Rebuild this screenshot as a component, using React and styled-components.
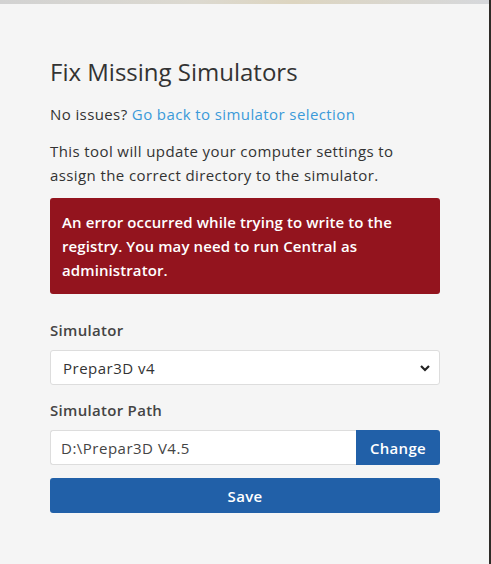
import React from "react";
import styled, { createGlobalStyle } from "styled-components";

const GlobalStyle = createGlobalStyle`
  html, body {
    margin: 0;
    padding: 0;
    background: #2e2b27;
  }
  * {
    box-sizing: border-box;
  }
`;

const Page = styled.div`
  display: flex;
  width: 491px;
  height: 564px;
  background: #2e2b27;
  font-family: "Open Sans", Lato, sans-serif;
`;

const Panel = styled.div`
  width: 489px;
  height: 564px;
  background: #f5f5f5;
  border-top: 4px solid transparent;
  border-image: linear-gradient(90deg, #d2d2d2, #dcd9d0 40%, #ddd5c0 60%, #d6d8dc) 1;
  padding: 52px 49px 0 50px;
  display: flex;
  flex-direction: column;
`;

const Title = styled.h1`
  margin: 0;
  font-size: 24px;
  font-weight: 400;
  color: #333;
  line-height: 32px;
`;

const Text = styled.p`
  margin: ${(p) => p.$mt || 0}px 0 0;
  font-size: 15px;
  line-height: 24px;
  color: #333;
  letter-spacing: 0.4px;
`;

const Link = styled.a`
  color: #3b9ad9;
  text-decoration: none;
  cursor: pointer;
`;

const ErrorBox = styled.div`
  margin-top: 11px;
  background: #93141e;
  color: #fff;
  border-radius: 3px;
  padding: 12px 40px 12px 12px;
  font-size: 15px;
  font-weight: 600;
  line-height: 24px;
  letter-spacing: 0.1px;
`;

const Label = styled.label`
  display: block;
  margin-top: ${(p) => p.$mt}px;
  font-size: 15px;
  font-weight: 600;
  color: #444;
  line-height: 20px;
  letter-spacing: 0.3px;
`;

const SelectBox = styled.div`
  margin-top: 10px;
  height: 35px;
  background: #fff;
  border: 1px solid #ddd;
  border-radius: 3px;
  display: flex;
  align-items: center;
  justify-content: space-between;
  padding: 0 8px 0 12px;
  font-size: 15px;
  color: #333;
  letter-spacing: 0.5px;
`;

const Group = styled.div`
  margin-top: 10px;
  display: flex;
  height: 35px;
`;

const Input = styled.div`
  flex: 1;
  background: #fff;
  border: 1px solid #ddd;
  border-right: none;
  border-radius: 3px 0 0 3px;
  display: flex;
  align-items: center;
  padding: 0 10px;
  font-size: 15px;
  color: #444;
  letter-spacing: 0.5px;
`;

const Button = styled.button`
  background: #2160a8;
  color: #fff;
  border: none;
  font-family: inherit;
  font-size: 15px;
  font-weight: 600;
  height: 35px;
  border-radius: ${(p) => (p.$attached ? "0 3px 3px 0" : "3px")};
  width: ${(p) => (p.$attached ? "84px" : "100%")};
  margin-top: ${(p) => p.$mt || 0}px;
  letter-spacing: 0.3px;
  cursor: pointer;
`;

const Chevron = () => (
  <svg width="12" height="12" viewBox="0 0 12 12">
    <path d="M2 4 L6 8 L10 4" fill="none" stroke="#222" strokeWidth="2.2" />
  </svg>
);

export default function App() {
  return (
    <>
      <GlobalStyle />
      <Page>
        <Panel>
          <Title>Fix Missing Simulators</Title>
          <Text $mt={14}>
            No issues? <Link>Go back to simulator selection</Link>
          </Text>
          <Text $mt={13}>
            This tool will update your computer settings to assign the correct
            directory to the simulator.
          </Text>
          <ErrorBox>
            An error occurred while trying to write to the registry. You may
            need to run Central as administrator.
          </ErrorBox>
          <Label $mt={26}>Simulator</Label>
          <SelectBox>
            <span>Prepar3D v4</span>
            <Chevron />
          </SelectBox>
          <Label $mt={15}>Simulator Path</Label>
          <Group>
            <Input>D:\Prepar3D V4.5</Input>
            <Button $attached>Change</Button>
          </Group>
          <Button $mt={13}>Save</Button>
        </Panel>
      </Page>
    </>
  );
}
